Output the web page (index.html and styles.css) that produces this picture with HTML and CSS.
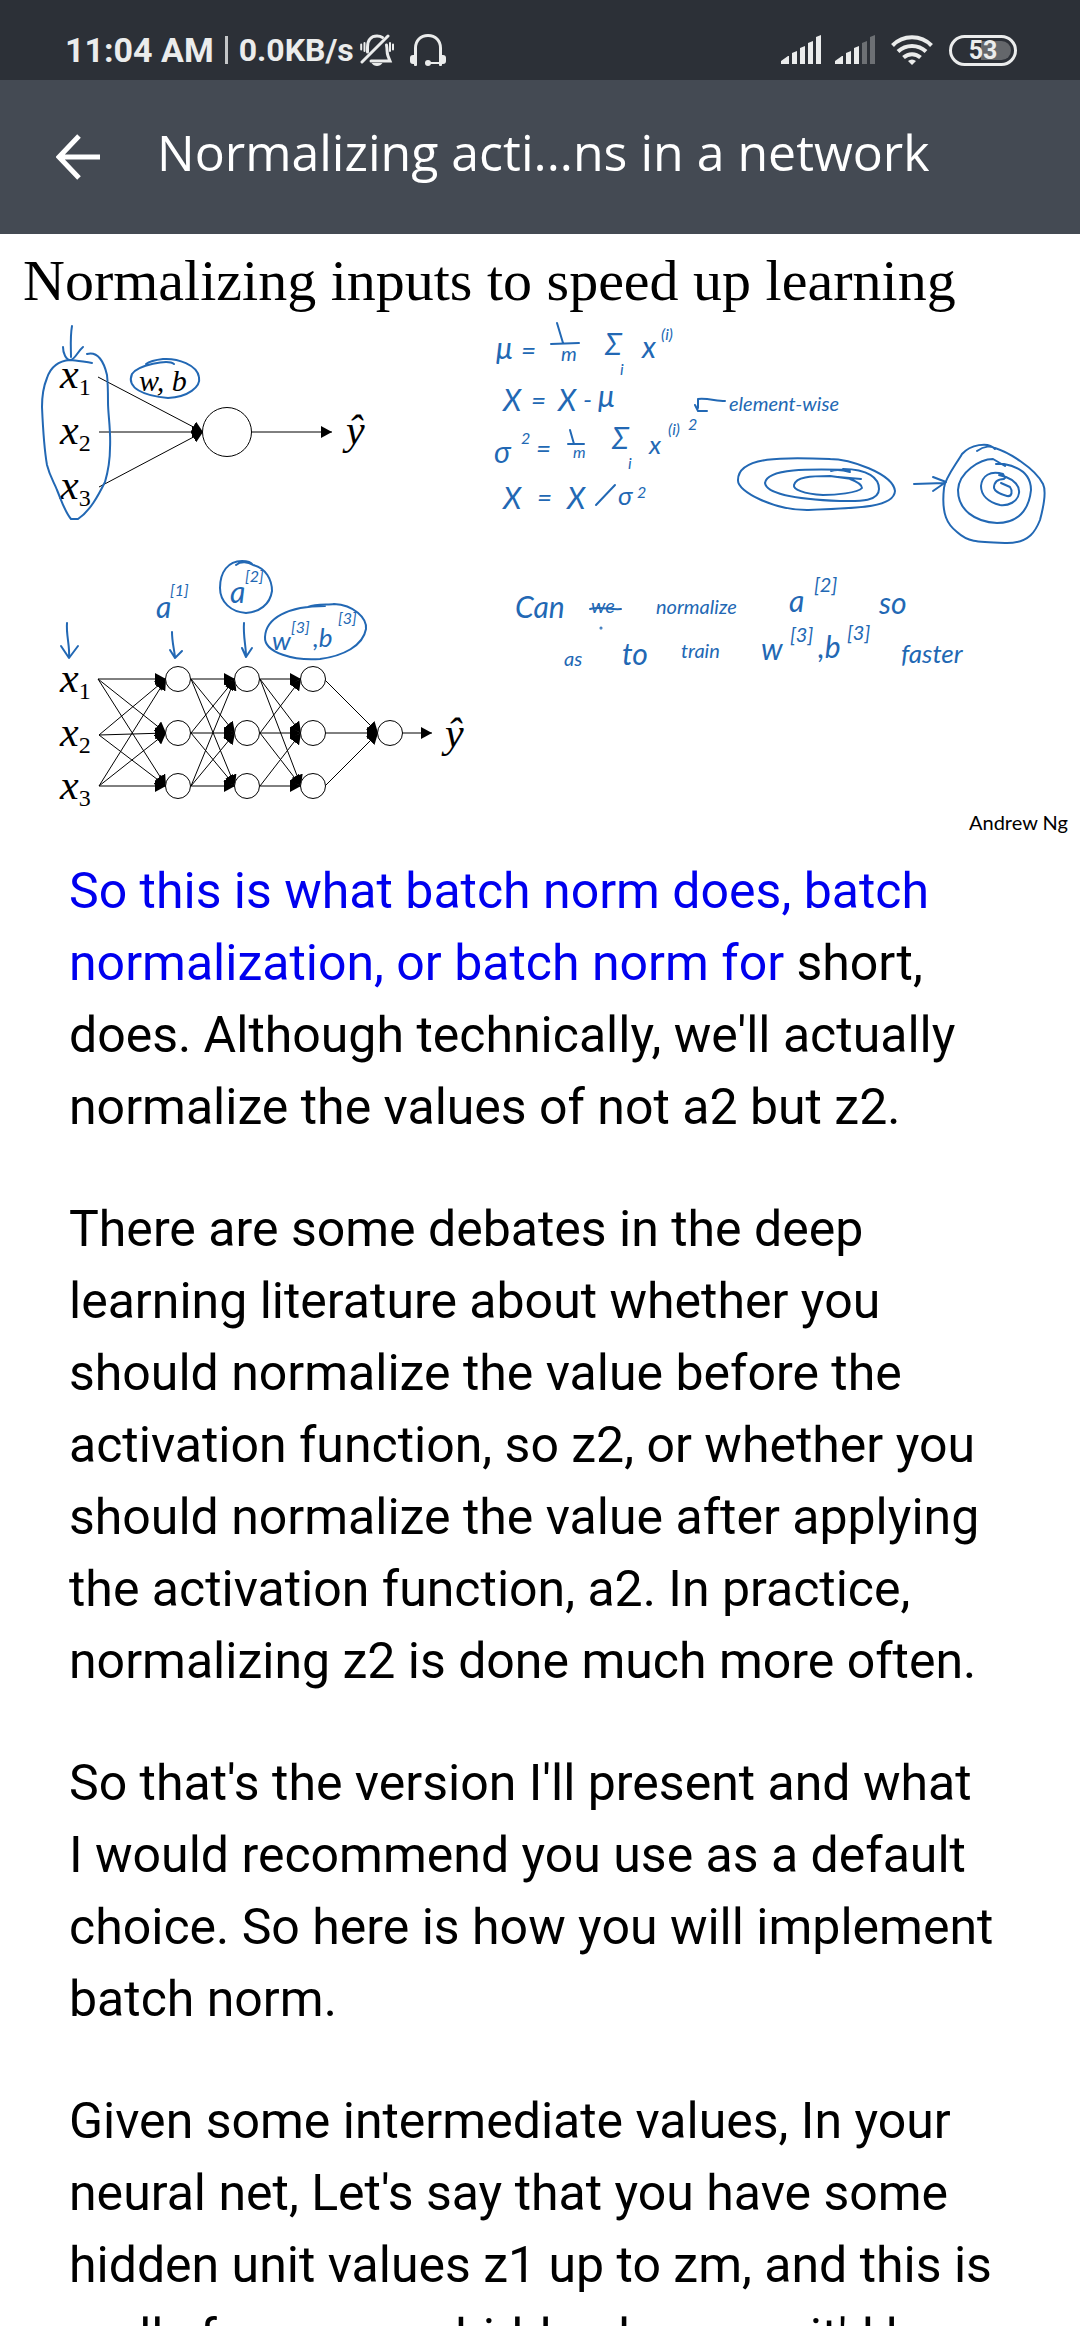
FILE: index.html
```html
<!DOCTYPE html>
<html lang="en">
<head>
<meta charset="utf-8">
<meta name="viewport" content="width=device-width, initial-scale=1">
<title>Normalizing activations in a network</title>
<link rel="stylesheet" href="styles.css">
</head>
<body>
<div class="screen">
  <div class="status">
    <div class="status-left">
      <span class="clock">11:04 AM</span>
      <span class="divider"></span>
      <span class="rate">0.0KB/s</span>
      <svg class="bell" viewBox="0 0 34 32" aria-label="Silent">
        <g fill="none" stroke="#ebecec" stroke-width="3" stroke-linecap="round">
          <path d="M7.500 18V13C7.500 6 11 2 17 2c2 0 4 .5 5.500 1.500"/>
          <path d="M26.500 11c1 5 0 7 1.500 11l2 5H11"/>
          <path d="M28 2L2 28"/>
          <path d="M1.200 10.500v5M4.500 9v8M33 10.500v5M30 9v8" stroke-width="2"/>
        </g>
        <path d="M11.500 29h11c-1.500 2-3 3-5.500 3s-4-1-5.500-3z" fill="#ebecec"/>
      </svg>
      <svg class="headset" viewBox="0 0 36 32" aria-label="Headset">
        <path d="M5.500 24V14C5.500 6.500 10.500 1.500 18 1.500S30.500 6.500 30.500 14v10" fill="none" stroke="#ebecec" stroke-width="3"/>
        <path d="M18 29h12" stroke="#ebecec" stroke-width="2"/>
        <rect x="0" y="21" width="7" height="9" rx="3" fill="#ebecec"/>
        <rect x="29" y="21" width="7" height="9" rx="3" fill="#ebecec"/>
        <rect x="4" y="20" width="3" height="12" rx="1" fill="#ebecec"/>
        <rect x="29" y="20" width="3" height="12" rx="1" fill="#ebecec"/>
        <circle cx="18" cy="29" r="3" fill="#ebecec"/>
      </svg>
    </div>
    <div class="status-right">
      <svg class="signal" viewBox="0 0 40 30" aria-label="Signal full" fill="#ebecec">
        <path d="M0 26l7-5h1v8H0zM11 18l5-2v13h-5zM19 13l5-2v18h-5zM27 8l5-2v23h-5zM35 2l5-2v29h-5z"/>
      </svg>
      <svg class="signal" viewBox="0 0 40 30" aria-label="Signal medium" fill="#ebecec">
        <path d="M0 26l7-5h1v8H0zM11 18l5-2v13h-5zM19 13l5-2v18h-5z"/>
        <path d="M27 8l5-2v23h-5zM35 2l5-2v29h-5z" fill="#6d7074"/>
      </svg>
      <svg class="wifi" viewBox="0 0 42 30" aria-label="Wi-Fi">
        <g fill="none" stroke="#ebecec" stroke-width="4">
          <path d="M1.500 10.500C12 -.5 30 -.5 40.500 10.500"/>
          <path d="M7 16.500c8-7.500 20-7.500 28 0"/>
          <path d="M12.500 22.500c5-4.500 12-4.500 17 0"/>
        </g>
        <path d="M17 26c2.500-2 5.500-2 8 0l-4 4z" fill="#ebecec"/>
      </svg>
      <span class="battery"><span class="battery-empty"></span><span class="battery-text">53</span></span>
    </div>
  </div>

  <header class="bar">
    <button class="back" type="button" aria-label="Back">
      <svg viewBox="0 0 44 46"><path d="M44 23H4M23 2L3 23l20 21" fill="none" stroke="#fff" stroke-width="5"/></svg>
    </button>
    <h1 class="title">Normalizing acti...ns in a network</h1>
  </header>

  <svg class="slide" viewBox="0 234 1080 608" role="img" aria-label="Lecture slide">
    <defs>
      <marker id="tip" markerUnits="userSpaceOnUse" markerWidth="12" markerHeight="12" refX="11" refY="6" orient="auto">
        <path d="M0 0L11 6L0 12z"/>
      </marker>
    </defs>
    <text class="slide-title" x="23" y="300">Normalizing inputs to speed up learning</text>

    <g class="math">
      <text x="60" y="388">x<tspan class="sub" dy="7">1</tspan></text>
      <text x="60" y="444">x<tspan class="sub" dy="7">2</tspan></text>
      <text x="60" y="499">x<tspan class="sub" dy="7">3</tspan></text>
      <text class="weights" x="139" y="391">w, b</text>
      <text x="346" y="444">ŷ</text>
      <text x="60" y="692">x<tspan class="sub" dy="7">1</tspan></text>
      <text x="60" y="746">x<tspan class="sub" dy="7">2</tspan></text>
      <text x="60" y="799">x<tspan class="sub" dy="7">3</tspan></text>
      <text x="445" y="747">ŷ</text>
    </g>

    <g class="wire">
      <path d="M98 377L203 432"/><path d="M99 432H203"/><path d="M99 487L203 432"/>
      <path d="M251 432H332"/>
      <path d="M98 679H166"/><path d="M98 679L166 733"/><path d="M98 679L166 786"/>
      <path d="M99 735L166 679"/><path d="M99 735L166 733"/><path d="M99 735L166 786"/>
      <path d="M99 786L166 679"/><path d="M99 786L166 733"/><path d="M99 786H166"/>
      <path d="M191 679H235"/><path d="M191 679L235 733"/><path d="M191 679L235 786"/>
      <path d="M191 733L235 679"/><path d="M191 733H235"/><path d="M191 733L235 786"/>
      <path d="M191 786L235 679"/><path d="M191 786L235 733"/><path d="M191 786H235"/>
      <path d="M260 679H301"/><path d="M260 679L301 733"/><path d="M260 679L301 786"/>
      <path d="M260 733L301 679"/><path d="M260 733H301"/><path d="M260 733L301 786"/>
      <path d="M260 786L301 733"/><path d="M260 786H301"/>
      <path d="M325 680L378 733"/><path d="M325 733H378"/><path d="M325 786L378 733"/>
      <path d="M402 733H432"/>
    </g>
    <g class="node">
      <circle cx="227" cy="432" r="24.500"/>
      <circle cx="178" cy="679" r="12.500"/><circle cx="178" cy="733" r="12.500"/><circle cx="178" cy="786" r="12.500"/>
      <circle cx="247" cy="679" r="12.500"/><circle cx="247" cy="733" r="12.500"/><circle cx="247" cy="786" r="12.500"/>
      <circle cx="313" cy="679" r="12.500"/><circle cx="313" cy="733" r="12.500"/><circle cx="313" cy="786" r="12.500"/>
      <circle cx="390" cy="733" r="12.500"/>
    </g>

    <g class="ink">
      <path d="M72 326C70 337 71 348 71 357M63 347C63 353 66 360 70 360C75 360 77 352 83 347"/>
      <path d="M92 363C84 362 76 360 70 360C56 361 50 369 47 378C42 390 42 400 42 407C43 430 44 448 47 465C50 477 54 482 57 490C62 502 65 512 71 519H78C90 511 98 496 105 482C109 468 110 458 110 448C111 430 108 415 108 402C108 392 108 384 107 375C104 362 98 351 87 354"/>
      <path d="M174 364C168 359 138 365 132 374C126 388 144 396 168 398C188 397 201 387 199 377C197 365 178 358 163 359C155 360 150 361 146 364"/>
      <path d="M67 623C66 635 70 646 69 657M61 646L69 658L78 646"/>
      <path d="M172 632C172 642 174 648 175 657M170 650L175 658L182 651"/>
      <path d="M244 623C243 636 246 646 246 656M242 648L246 657L252 648"/>
      <path d="M236 565C241 561 248 562 253 565C266 568 272 580 272 591C270 605 259 612 246 613C231 612 220 602 220 588C220 572 228 561 242 561C248 561 251 562 253 565"/>
      <path d="M308 607C316 604 328 605 334 604C354 605 367 618 366 629C363 646 343 656 320 659C295 661 264 653 265 637C266 618 288 606 325 606"/>

      <path d="M551 344L579 343M557 323L563 343M568 444H584M570 430L574 444"/>
      <path d="M725 401C716 401 708 398 698 399L698 408M695 405L698 411L707 411"/>
      <path d="M615 485L596 505"/>
      <path d="M826 459C850 458 893 474 895 491C894 507 862 508 807 510C775 510 737 492 738 480C738 456 785 457 830 459"/>
      <path d="M831 471C837 469 843 470 850 472M843 469C868 469 879 478 879 489C879 503 855 501 840 501C815 500 767 497 765 483C767 468 810 469 850 470"/>
      <path d="M838 477L861 479M850 479C858 482 862 485 862 488C858 493 835 495 823 495C803 494 793 489 794 485C796 477 810 476 830 476L852 479"/>
      <path d="M914 484L944 483M933 477L946 482L933 491"/>
      <path d="M977 451C984 446 992 445 995 449C988 441 970 445 962 454C955 466 945 478 944 488C941 515 948 525 957 532C968 542 975 542 1007 543C1030 543 1036 530 1040 520C1044 505 1046 490 1043 484C1035 468 1008 452 995 448"/>
      <path d="M996 464L1004 464C1020 467 1031 475 1031 490C1029 510 1018 523 997 523C975 522 958 510 958 490C959 472 980 459 993 459L1005 466"/>
      <path d="M999 475L1006 477C1014 480 1020 486 1019 493C1018 502 1008 506 1000 505C988 502 981 495 981 486C982 476 990 470 1003 474L1005 478"/>
      <path d="M1004 479C998 479 994 482 994 488C995 492 1003 495 1007 496C1012 497 1013 491 1010 487L1001 483"/>
      <path d="M590 609C600 606 610 610 621 609"/>
      <circle cx="601" cy="628" r="0.500"/>
    </g>

    <g class="hand">
      <text class="l" x="496" y="359">μ</text><text x="521" y="360">=</text>
      <text class="m" x="561" y="361">m</text>
      <text class="l" x="605" y="355">Σ</text><text class="s" x="620" y="375">i</text>
      <text class="l" x="642" y="358">x</text><text class="s" x="661" y="340">(i)</text>

      <text class="l" x="503" y="411">X</text><text x="531" y="410">=</text><text class="l" x="558" y="411">X</text><text x="583" y="409">-</text><text class="l" x="598" y="407">μ</text>
      <text class="m" x="729" y="411">element-wise</text>

      <text class="l" x="494" y="463">σ</text><text class="s" x="521" y="444">2</text><text x="536" y="458">=</text>
      <text class="s" x="573" y="458">m</text>
      <text class="l" x="612" y="449">Σ</text><text class="s" x="628" y="469">i</text>
      <text x="649" y="454">x</text><text class="s" x="668" y="435">(i)</text><text class="s" x="688" y="430">2</text>

      <text class="l" x="503" y="509">X</text><text x="537" y="507">=</text><text class="l" x="567" y="509">X</text>
      <text x="618" y="505">σ</text><text class="s" x="637" y="498">2</text>

      <text class="l" x="156" y="618">a</text><text class="s" x="170" y="596">[1]</text>
      <text class="l" x="230" y="603">a</text><text class="s" x="245" y="582">[2]</text>
      <text x="272" y="650">w</text><text class="s" x="291" y="633">[3]</text>
      <text x="313" y="647">,b</text><text class="s" x="338" y="624">[3]</text>

      <text class="l" x="515" y="618">Can</text>
      <text class="m" x="591" y="613">we</text>
      <text class="m" x="656" y="614">normalize</text>
      <text class="l" x="789" y="612">a</text><text class="m" x="814" y="592">[2]</text>
      <text class="l" x="879" y="614">so</text>
      <text class="m" x="564" y="666">as</text>
      <text class="l" x="622" y="665">to</text>
      <text class="m" x="681" y="658">train</text>
      <text class="l" x="761" y="660">w</text><text class="m" x="790" y="642">[3]</text>
      <text class="l" x="818" y="658">,b</text><text class="m" x="847" y="640">[3]</text>
      <text x="901" y="663">faster</text>
    </g>
    <text class="author" x="969" y="830">Andrew Ng</text>
  </svg>

  <main class="transcript">
    <p><span class="spoken">So this is what batch norm does, batch normalization, or batch norm for</span> short, does. Although technically, we'll actually normalize the values of not a2 but z2.</p>
    <p>There are some debates in the deep learning literature about whether you should normalize the value before the activation function, so z2, or whether you should normalize the value after applying the activation function, a2. In practice, normalizing z2 is done much more often.</p>
    <p>So that's the version I'll present and what I&nbsp;would recommend you use as a default choice. So here is how you will implement batch norm.</p>
    <p>Given some intermediate values, In your neural net, Let's say that you have some hidden unit values z1 up to zm, and this is really from some hidden layer, so it'd be</p>
  </main>
</div>
</body>
</html>
```

FILE: styles.css
```css
* { box-sizing: border-box; }

body {
  margin: 0;
  background: #fff;
  font-family: Roboto, sans-serif;
}

.screen {
  display: flex;
  flex-direction: column;
  height: 100vh;
  padding-bottom: 14px;
  overflow: hidden;
}

/* Status bar */
.status {
  display: flex;
  flex: none;
  justify-content: space-between;
  height: 80px;
  padding: 20px 63px 0 65px;
  background: #2c3037;
  color: #ebecec;
  font-weight: 700;
  line-height: 60px;
}

.status-left,
.status-right {
  display: flex;
  align-items: center;
  height: 60px;
}

.divider {
  width: 3px;
  height: 28px;
  margin: 0 11px;
  background: #c4c6c8;
}

.clock { font-size: 34px; }
.rate { font-size: 32px; }

.bell {
  width: 34px;
  height: 32px;
  margin-left: 6px;
}

.headset {
  width: 36px;
  height: 32px;
  margin-left: 16px;
}

.signal {
  width: 40px;
  height: 30px;
  margin-right: 14px;
}

.wifi {
  width: 42px;
  height: 30px;
  margin: 0 16px 0 2px;
}

.battery {
  position: relative;
  display: grid;
  place-items: center;
  width: 68px;
  height: 31px;
  border: 3px solid #ebecec;
  border-radius: 16px;
}

.battery-empty {
  position: absolute;
  top: 3px;
  right: 3px;
  bottom: 3px;
  width: 30px;
  border-radius: 0 10px 10px 0;
  background: #64676b;
}

.battery-text {
  position: relative;
  font-size: 25px;
  line-height: 25px;
}

/* Title bar */
.bar {
  display: flex;
  flex: none;
  align-items: center;
  gap: 57px;
  height: 154px;
  padding: 0 56px;
  background: #444a53;
  color: #fff;
}

.back {
  width: 44px;
  height: 46px;
  padding: 0;
  border: 0;
  background: none;
}

.back svg {
  display: block;
  width: 44px;
  height: 46px;
}

.title {
  margin: 0;
  padding-bottom: 10px;
  font-family: "Open Sans", "Noto Sans", sans-serif;
  font-size: 50px;
  font-weight: 400;
  white-space: nowrap;
}

/* Lecture slide */
.slide {
  display: block;
  flex: none;
  width: 100%;
}

.slide-title {
  font-family: "Liberation Serif", serif;
  font-size: 58px;
}

.math {
  font-family: "Liberation Serif", serif;
  font-size: 42px;
  font-style: italic;
}

.sub {
  font-size: 24px;
  font-style: normal;
}

.weights { font-size: 30px; }

.wire path {
  fill: none;
  stroke: #000;
  stroke-width: 1;
  marker-end: url(#tip);
}

.node circle {
  fill: #fff;
  stroke: #000;
  stroke-width: 1;
}

.ink {
  fill: none;
  stroke: #2268b4;
  stroke-width: 2;
  stroke-linecap: round;
  stroke-linejoin: round;
}

.hand {
  fill: #2268b4;
  font-family: Lato, sans-serif;
  font-size: 26px;
  font-style: italic;
}

.hand .s { font-size: 16px; }
.hand .m { font-size: 20px; }
.hand .l { font-size: 30px; }

.author {
  font-family: Lato, sans-serif;
  font-size: 20px;
}

/* Transcript */
.transcript {
  flex: 1;
  min-height: 0;
  padding: 13px 69px 0;
  overflow: hidden;
  color: #000;
  font-size: 50px;
  line-height: 72px;
}

.transcript p { margin: 0 0 50px; }

.spoken { color: #0000ee; }
```
